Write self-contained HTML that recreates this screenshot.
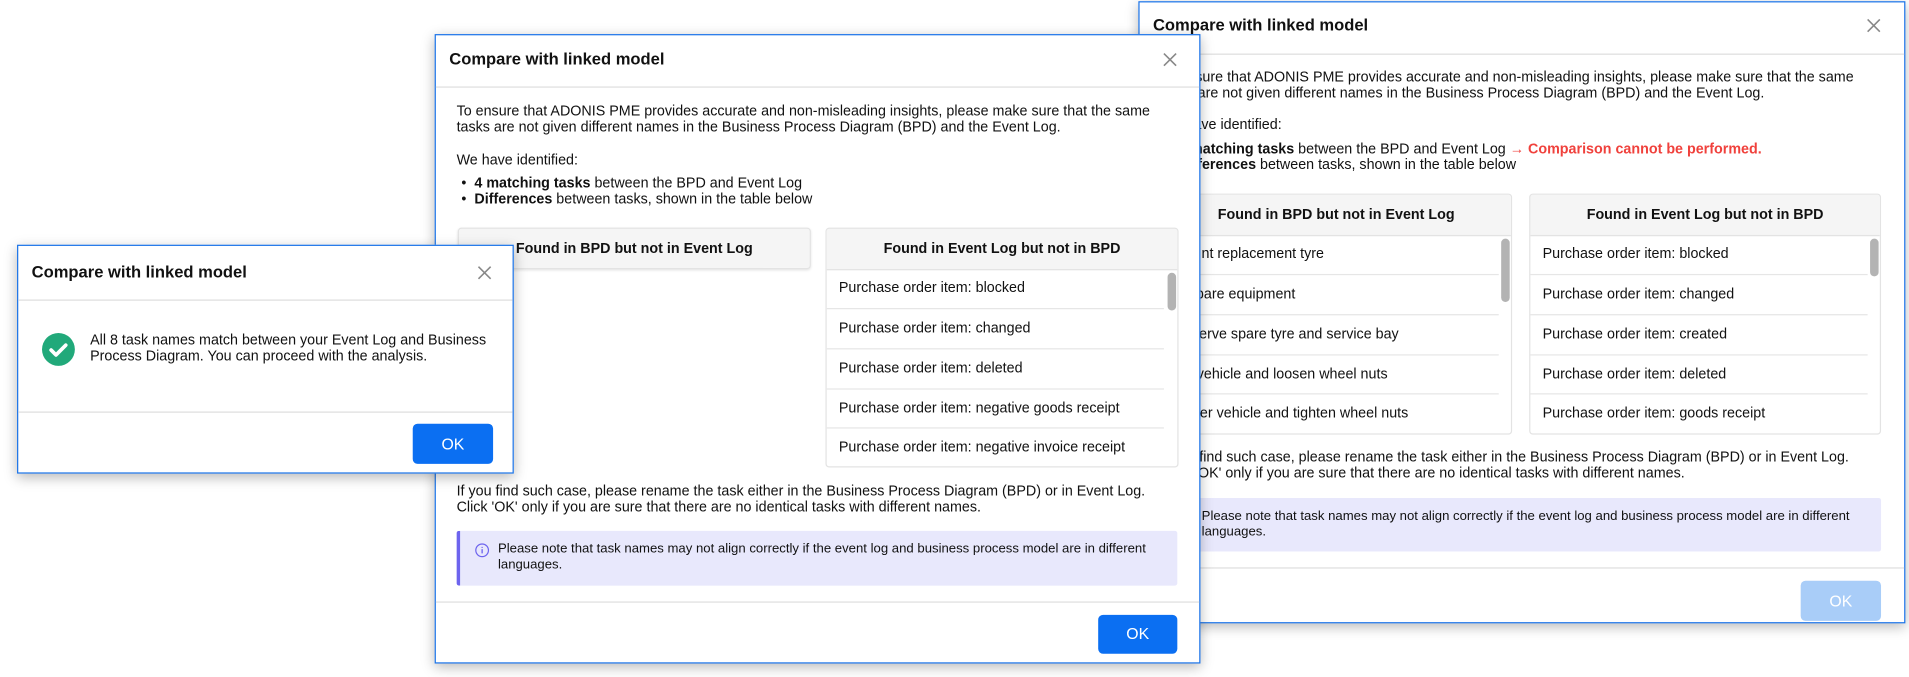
<!DOCTYPE html>
<html><head><meta charset="utf-8"><style>
html,body{margin:0;padding:0;background:#fff;width:1909px;height:676px;overflow:hidden}
#w{position:absolute;left:0;top:0;width:1568px;height:556px;transform:scale(1.2175);transform-origin:0 0;font-family:"Liberation Sans",Arial,sans-serif;color:#111;font-size:11.75px}
.dlg{position:absolute;background:#fff;border:1px solid #1a73e8;box-sizing:border-box;box-shadow:0 3px 10px rgba(0,0,0,.28)}
.a{position:absolute;white-space:nowrap;line-height:13px}
.title{font-weight:bold;font-size:13.6px;line-height:16px}
.hr{position:absolute;left:0;right:0;height:1px;background:#dedede}
.x{position:absolute;width:12px;height:12px}
.btn{position:absolute;background:#0b6ff2;color:#fff;border-radius:4px;text-align:center;font-size:13px}
.tbl{position:absolute;border:1px solid #e3e3e3;border-radius:3px;box-sizing:border-box;background:#fff;overflow:hidden}
.th{position:absolute;left:0;right:0;top:0;height:33px;background:#f5f5f5;border-bottom:1px solid #e3e3e3;font-weight:bold;text-align:center;line-height:33px}
.row{position:absolute;left:0;height:32.85px;line-height:32px;padding-left:10px;box-sizing:border-box;border-bottom:1px solid #e6e6e6;white-space:nowrap}
.sb{position:absolute;width:6.5px;border-radius:4px;background:#b3b3b3}
.note{position:absolute;background:#e8e8fc;border-left:3px solid #6d64ee;box-sizing:border-box;border-radius:2px}
</style></head><body><div id="w">

<!-- right dialog -->
<div class="dlg" style="left:935px;top:1px;width:630px;height:511px">
 <div class="a title" style="left:11px;top:11px">Compare with linked model</div>
 <svg class="x" style="left:597px;top:13px" viewBox="0 0 12 12"><path d="M1 1L11 11M11 1L1 11" stroke="#888" stroke-width="1.3"/></svg>
 <div class="hr" style="top:42px"></div>
 <div class="a" style="left:17px;top:55px">To ensure that ADONIS PME provides accurate and non-misleading insights, please make sure that the same<br>tasks are not given different names in the Business Process Diagram (BPD) and the Event Log.</div>
 <div class="a" style="left:17px;top:94px">We have identified:</div>
 <div class="a" style="left:21px;top:114px">•&nbsp;&nbsp;<b>0 matching tasks</b> between the BPD and Event Log <span style="color:#f0413c">→ <b>Comparison cannot be performed.</b></span><br>•&nbsp;&nbsp;<b>Differences</b> between tasks, shown in the table below</div>
 <div class="tbl" style="left:17px;top:157px;width:289px;height:198px">
  <div class="th">Found in BPD but not in Event Log</div>
  <div class="row" style="top:33px;width:277px">Mount replacement tyre</div>
  <div class="row" style="top:65.85px;width:277px">Prepare equipment</div>
  <div class="row" style="top:98.7px;width:277px">Reserve spare tyre and service bay</div>
  <div class="row" style="top:131.55px;width:277px">Lift vehicle and loosen wheel nuts</div>
  <div class="row" style="top:164.4px;width:277px;border:none">Lower vehicle and tighten wheel nuts</div>
  <div class="sb" style="left:279px;top:36px;height:52px"></div>
 </div>
 <div class="tbl" style="left:320px;top:157px;width:289px;height:198px">
  <div class="th">Found in Event Log but not in BPD</div>
  <div class="row" style="top:33px;width:277px">Purchase order item: blocked</div>
  <div class="row" style="top:65.85px;width:277px">Purchase order item: changed</div>
  <div class="row" style="top:98.7px;width:277px">Purchase order item: created</div>
  <div class="row" style="top:131.55px;width:277px">Purchase order item: deleted</div>
  <div class="row" style="top:164.4px;width:277px;border:none">Purchase order item: goods receipt</div>
  <div class="sb" style="left:279px;top:36px;height:31px"></div>
 </div>
 <div class="a" style="left:17px;top:367px">If you find such case, please rename the task either in the Business Process Diagram (BPD) or in Event Log.<br>Click 'OK' only if you are sure that there are no identical tasks with different names.</div>
 <div class="note" style="left:17px;top:407px;width:592px;height:44px">
  <svg style="position:absolute;left:12px;top:10px" width="12" height="12" viewBox="0 0 12 12"><circle cx="6" cy="6" r="5.2" fill="none" stroke="#6d64ee" stroke-width="1"/><path d="M6 5v3.5M6 3.2v.8" stroke="#6d64ee" stroke-width="1.1"/></svg>
  <div class="a" style="left:31px;top:9px;font-size:10.8px;line-height:13px">Please note that task names may not align correctly if the event log and business process model are in different<br>languages.</div>
 </div>
 <div class="hr" style="top:464px"></div>
 <div class="btn" style="left:543px;top:475px;width:66px;height:33px;line-height:33px;background:#a9cdf8">OK</div>
</div>

<!-- middle dialog -->
<div class="dlg" style="left:357px;top:28px;width:629px;height:517px">
 <div class="a title" style="left:11px;top:12px">Compare with linked model</div>
 <svg class="x" style="left:597px;top:14px" viewBox="0 0 12 12"><path d="M1 1L11 11M11 1L1 11" stroke="#888" stroke-width="1.3"/></svg>
 <div class="hr" style="top:42px"></div>
 <div class="a" style="left:17px;top:56px">To ensure that ADONIS PME provides accurate and non-misleading insights, please make sure that the same<br>tasks are not given different names in the Business Process Diagram (BPD) and the Event Log.</div>
 <div class="a" style="left:17px;top:96px">We have identified:</div>
 <div class="a" style="left:21px;top:115px">•&nbsp;&nbsp;<b>4 matching tasks</b> between the BPD and Event Log<br>•&nbsp;&nbsp;<b>Differences</b> between tasks, shown in the table below</div>
 <div class="tbl" style="left:18px;top:158px;width:290px;height:34px;box-shadow:0 1px 2px rgba(0,0,0,.1)">
  <div class="th">Found in BPD but not in Event Log</div>
 </div>
 <div class="tbl" style="left:320px;top:158px;width:290px;height:197px">
  <div class="th">Found in Event Log but not in BPD</div>
  <div class="row" style="top:33px;width:277px">Purchase order item: blocked</div>
  <div class="row" style="top:65.85px;width:277px">Purchase order item: changed</div>
  <div class="row" style="top:98.7px;width:277px">Purchase order item: deleted</div>
  <div class="row" style="top:131.55px;width:277px">Purchase order item: negative goods receipt</div>
  <div class="row" style="top:164.4px;width:277px;border:none">Purchase order item: negative invoice receipt</div>
  <div class="sb" style="left:280px;top:36px;height:31px"></div>
 </div>
 <div class="a" style="left:17px;top:368px">If you find such case, please rename the task either in the Business Process Diagram (BPD) or in Event Log.<br>Click 'OK' only if you are sure that there are no identical tasks with different names.</div>
 <div class="note" style="left:17px;top:407px;width:592px;height:45px">
  <svg style="position:absolute;left:12px;top:10px" width="12" height="12" viewBox="0 0 12 12"><circle cx="6" cy="6" r="5.2" fill="none" stroke="#6d64ee" stroke-width="1"/><path d="M6 5v3.5M6 3.2v.8" stroke="#6d64ee" stroke-width="1.1"/></svg>
  <div class="a" style="left:31px;top:9px;font-size:10.8px;line-height:13px">Please note that task names may not align correctly if the event log and business process model are in different<br>languages.</div>
 </div>
 <div class="hr" style="top:465px"></div>
 <div class="btn" style="left:544px;top:476px;width:65px;height:32px;line-height:32px">OK</div>
</div>

<!-- small dialog -->
<div class="dlg" style="left:14px;top:201px;width:408px;height:188px">
 <div class="a title" style="left:11px;top:14px">Compare with linked model</div>
 <svg class="x" style="left:377px;top:16px" viewBox="0 0 12 12"><path d="M1 1L11 11M11 1L1 11" stroke="#888" stroke-width="1.3"/></svg>
 <div class="hr" style="top:44px"></div>
 <svg style="position:absolute;left:19px;top:71px" width="28" height="28" viewBox="0 0 28 28"><circle cx="14" cy="14" r="13.5" fill="#21a97a"/><path d="M8 14.5l4 4 8-8" fill="none" stroke="#fff" stroke-width="3" stroke-linecap="round" stroke-linejoin="round"/></svg>
 <div class="a" style="left:59px;top:71px">All 8 task names match between your Event Log and Business<br>Process Diagram. You can proceed with the analysis.</div>
 <div class="hr" style="top:136px"></div>
 <div class="btn" style="left:324px;top:146px;width:66px;height:33px;line-height:33px">OK</div>
</div>

</div></body></html>
